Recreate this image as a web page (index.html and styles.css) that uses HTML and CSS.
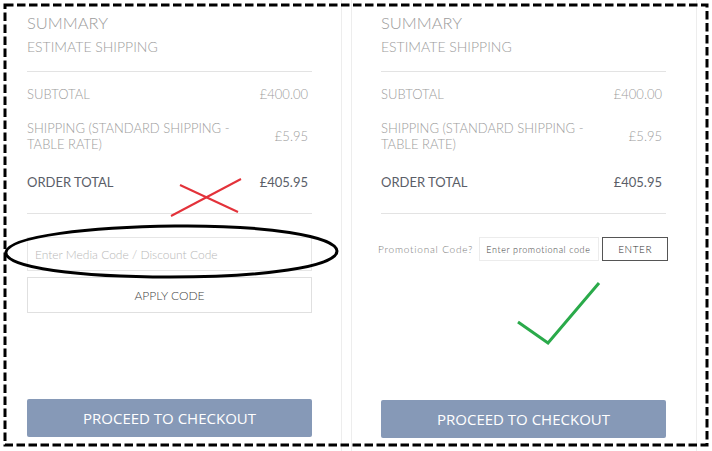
FILE: index.html
```html
<!DOCTYPE html>
<html lang="en">
<head>
<meta charset="utf-8">
<title>Summary comparison</title>
<link rel="stylesheet" href="styles.css">
</head>
<body>
<div class="page">
  <section class="panel panel-left">
    <h2 class="title">SUMMARY</h2>
    <h3 class="subtitle">ESTIMATE SHIPPING</h3>
    <div class="totals">
      <div class="row row-sub"><span class="label">SUBTOTAL</span><span class="value">£400.00</span></div>
      <div class="row row-ship"><span class="label">SHIPPING (STANDARD SHIPPING - TABLE RATE)</span><span class="value">£5.95</span></div>
      <div class="row row-total"><span class="label">ORDER TOTAL</span><span class="value">£405.95</span></div>
    </div>
    <div class="discount">
      <input class="code-input" type="text" placeholder="Enter Media Code / Discount Code">
      <button class="apply-btn" type="button">APPLY CODE</button>
    </div>
    <button class="checkout" type="button">PROCEED TO CHECKOUT</button>
  </section>

  <section class="panel panel-right">
    <h2 class="title">SUMMARY</h2>
    <h3 class="subtitle">ESTIMATE SHIPPING</h3>
    <div class="totals">
      <div class="row row-sub"><span class="label">SUBTOTAL</span><span class="value">£400.00</span></div>
      <div class="row row-ship"><span class="label">SHIPPING (STANDARD SHIPPING - TABLE RATE)</span><span class="value">£5.95</span></div>
      <div class="row row-total"><span class="label">ORDER TOTAL</span><span class="value">£405.95</span></div>
    </div>
    <div class="promo">
      <label class="promo-label" for="promo">Promotional Code?</label>
      <input id="promo" class="promo-input" type="text" placeholder="Enter promotional code">
      <button class="promo-btn" type="button">ENTER</button>
    </div>
    <button class="checkout" type="button">PROCEED TO CHECKOUT</button>
  </section>

  <svg class="annotations" width="712" height="451" viewBox="0 0 712 451" aria-hidden="true">
    <rect x="5" y="5" width="702" height="440" fill="none" stroke="#000" stroke-width="3" stroke-dasharray="8.5 3.5"/>
    <line x1="171" y1="216" x2="241" y2="179" stroke="#e3323a" stroke-width="2"/>
    <line x1="180" y1="185" x2="238" y2="212" stroke="#e3323a" stroke-width="2"/>
    <path d="M6 252 C 10 236, 90 227, 175 226 C 265 225, 336 236, 337 251 C 337 267, 262 277, 170 277 C 80 277, 4 268, 6 252 Z" fill="none" stroke="#000" stroke-width="3"/>
    <polyline points="518,322 548,343 599,283" fill="none" stroke="#2aaa4a" stroke-width="3"/>
  </svg>
</div>
</body>
</html>
```

FILE: styles.css
```css
* { box-sizing: border-box; }

html, body {
  margin: 0;
  padding: 0;
  background: #ffffff;
}

body {
  font-family: Lato, "Open Sans", "Liberation Sans", sans-serif;
  font-weight: 300;
  color: #9c9c9c;
}

.page {
  position: relative;
  width: 712px;
  height: 451px;
  display: flex;
  gap: 9px;
  overflow: hidden;
}

.panel {
  height: 451px;
  display: flex;
  flex-direction: column;
  padding: 12px 29px 14px 27px;
}

.panel-left {
  width: 342px;
  border-right: 1px solid #ededed;
}

.panel-right {
  width: 346px;
  border-left: 1px solid #ededed;
  border-right: 1px solid #ededed;
  padding: 12px 30px 13px 29px;
}

.title {
  margin: 0;
  font-size: 16.5px;
  line-height: 22px;
  font-weight: 300;
  color: #9c9c9c;
}

.subtitle {
  margin: 4px 0 0;
  font-size: 14px;
  line-height: 18px;
  font-weight: 300;
  color: #9c9c9c;
  padding-bottom: 15px;
  border-bottom: 1px solid #e3e3e3;
}

.totals {
  padding: 14px 0 23px;
  border-bottom: 1px solid #e3e3e3;
}

.row {
  display: flex;
  justify-content: space-between;
  align-items: center;
  font-size: 13px;
  line-height: 16px;
  padding-right: 4px;
}

.row .label { max-width: 215px; }

.row-sub { margin-bottom: 18px; }
.row-ship { margin-bottom: 22px; }

.row-total { color: #5a5e68; font-weight: 400; }

.discount {
  margin-top: 23px;
  display: flex;
  flex-direction: column;
  gap: 6px;
}

.code-input {
  height: 34px;
  border: 1px solid #e6e6e6;
  padding: 0 7px;
  font-family: inherit;
  font-weight: 300;
  font-size: 12px;
  color: #555;
  outline: none;
}

.code-input::placeholder { color: #b8b8b8; }

.apply-btn {
  height: 36px;
  border: 1px solid #e0e0e0;
  background: #fff;
  font-family: inherit;
  font-weight: 300;
  font-size: 12px;
  color: #3f3f3f;
}

.checkout {
  margin-top: auto;
  height: 38px;
  border: none;
  border-radius: 2px;
  background: #8699b7;
  color: #ffffff;
  font-family: "Open Sans", Lato, sans-serif;
  font-weight: 400;
  font-size: 15px;
}

.promo {
  margin: 23px -2px 0 -3px;
  display: flex;
  align-items: center;
}

.promo-label {
  font-size: 10px;
  font-weight: 300;
  letter-spacing: 0.8px;
  color: #7a7a7a;
  width: 102px;
}

.promo-input {
  width: 120px;
  height: 24px;
  border: 1px solid #ececec;
  padding: 0 6px;
  font-family: inherit;
  font-weight: 300;
  font-size: 9px;
  letter-spacing: 0.6px;
  color: #333;
  outline: none;
}

.promo-input::placeholder { color: #3c3c3c; }

.promo-btn {
  margin-left: 3px;
  width: 66px;
  height: 24px;
  border: 1px solid #555;
  background: #fff;
  font-family: inherit;
  font-weight: 300;
  font-size: 10px;
  letter-spacing: 0.6px;
  color: #333;
}

.annotations {
  position: absolute;
  left: 0;
  top: 0;
  pointer-events: none;
}
```
